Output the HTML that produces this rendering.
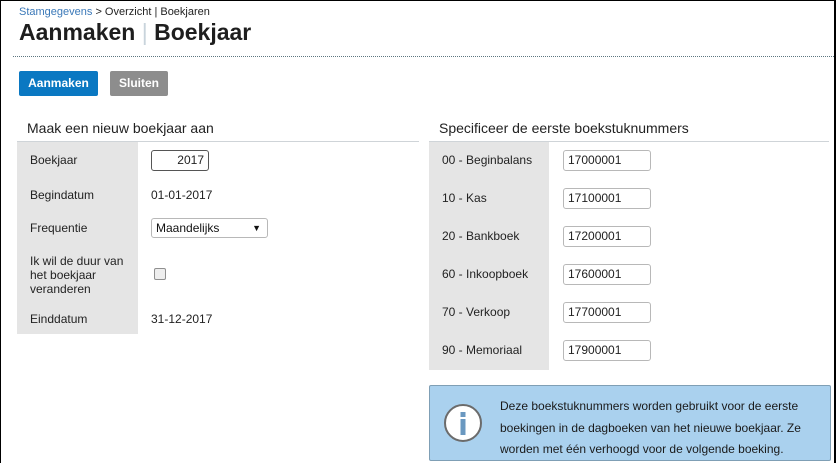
<!DOCTYPE html>
<html><head><meta charset="utf-8"><style>
*{box-sizing:border-box;margin:0;padding:0}
body{width:836px;height:463px;overflow:hidden;background:#fff;font-family:"Liberation Sans",Arial,sans-serif;color:#222;position:relative}
.frame{position:absolute;left:0;top:0;width:836px;height:463px;border:1px solid #000;border-right:2px solid #000;border-bottom:none}
.a{position:absolute;white-space:nowrap}
.bc{left:19px;top:6px;font-size:11px;color:#222}
.bc span{color:#3a78b8}
.title{left:19px;top:19px;font-size:23px;font-weight:bold;color:#1e1e1e}
.title i{font-style:normal;color:#c9d4dc;font-weight:normal}
.dots{left:13px;top:56px;width:821px;border-top:1px dotted #5d7680}
.btn{top:71px;height:25px;border-radius:2px;color:#fff;font-size:12px;font-weight:bold;line-height:25px;text-align:center}
.h{font-size:14px;color:#222;top:120px}
.line{top:141px;height:1px;background:#cfd4d8}
.lab{background:#e5e5e5}
.t{font-size:12px}
.inp{height:21px;border:1px solid #b8b8b8;border-radius:3px;background:#fff;font-size:12px;line-height:19px;padding-left:4px}
.info{left:429px;top:385px;width:402px;height:76px;background:#aad1ee;border:1px solid #7f9fb5;border-radius:2px}
</style></head><body>
<div class="frame"></div>
<div class="a bc"><span>Stamgegevens</span> &gt; Overzicht | Boekjaren</div>
<div class="a title">Aanmaken<i> | </i>Boekjaar</div>
<div class="a dots"></div>
<div class="a btn" style="left:19px;width:79px;background:#0a78c2">Aanmaken</div>
<div class="a btn" style="left:110px;width:58px;background:#8d8d8d">Sluiten</div>

<div class="a h" style="left:27px">Maak een nieuw boekjaar aan</div>
<div class="a line" style="left:17px;width:402px"></div>
<div class="a lab" style="left:17px;top:142px;width:121px;height:192px"></div>
<div class="a t" style="left:30px;top:153px">Boekjaar</div>
<div class="a inp" style="left:151px;top:150px;width:58px;text-align:right;padding-right:4px;border-color:#555">2017</div>
<div class="a t" style="left:30px;top:188px">Begindatum</div>
<div class="a t" style="left:151px;top:188px">01-01-2017</div>
<div class="a t" style="left:30px;top:221px">Frequentie</div>
<div class="a inp" style="left:151px;top:218px;width:117px;height:20px;line-height:18px;color:#111">Maandelijks<span style="position:absolute;right:6px;font-size:9px">▼</span></div>
<div class="a t" style="left:30px;top:254px;line-height:14px">Ik wil de duur van<br>het boekjaar<br>veranderen</div>
<div class="a" style="left:154px;top:268px;width:12px;height:12px;border:1px solid #8f8f8f;border-radius:2px;background:#eee"></div>
<div class="a t" style="left:30px;top:312px">Einddatum</div>
<div class="a t" style="left:151px;top:312px">31-12-2017</div>

<div class="a h" style="left:439px">Specificeer de eerste boekstuknummers</div>
<div class="a line" style="left:429px;width:400px"></div>
<div class="a lab" style="left:429px;top:142px;width:120px;height:228px"></div>
<div class="a t" style="left:442px;top:153px">00 - Beginbalans</div>
<div class="a inp" style="left:563px;top:150px;width:88px">17000001</div>
<div class="a t" style="left:442px;top:191px">10 - Kas</div>
<div class="a inp" style="left:563px;top:188px;width:88px">17100001</div>
<div class="a t" style="left:442px;top:229px">20 - Bankboek</div>
<div class="a inp" style="left:563px;top:226px;width:88px">17200001</div>
<div class="a t" style="left:442px;top:267px">60 - Inkoopboek</div>
<div class="a inp" style="left:563px;top:264px;width:88px">17600001</div>
<div class="a t" style="left:442px;top:305px">70 - Verkoop</div>
<div class="a inp" style="left:563px;top:302px;width:88px">17700001</div>
<div class="a t" style="left:442px;top:343px">90 - Memoriaal</div>
<div class="a inp" style="left:563px;top:340px;width:88px">17900001</div>

<div class="a info"></div>
<svg class="a" style="left:443px;top:403px" width="40" height="40" viewBox="0 0 40 40">
<circle cx="20" cy="20" r="18" fill="#fff" stroke="#6b6b6b" stroke-width="2"/>
<rect x="17.5" y="9" width="5" height="5" fill="#6a98c0"/>
<rect x="17.5" y="16" width="5" height="16" fill="#6a98c0"/>
</svg>
<div class="a t" style="left:500px;top:396px;line-height:21.5px;color:#1a1a1a">Deze boekstuknummers worden gebruikt voor de eerste<br>boekingen in de dagboeken van het nieuwe boekjaar. Ze<br>worden met één verhoogd voor de volgende boeking.</div>
</body></html>
